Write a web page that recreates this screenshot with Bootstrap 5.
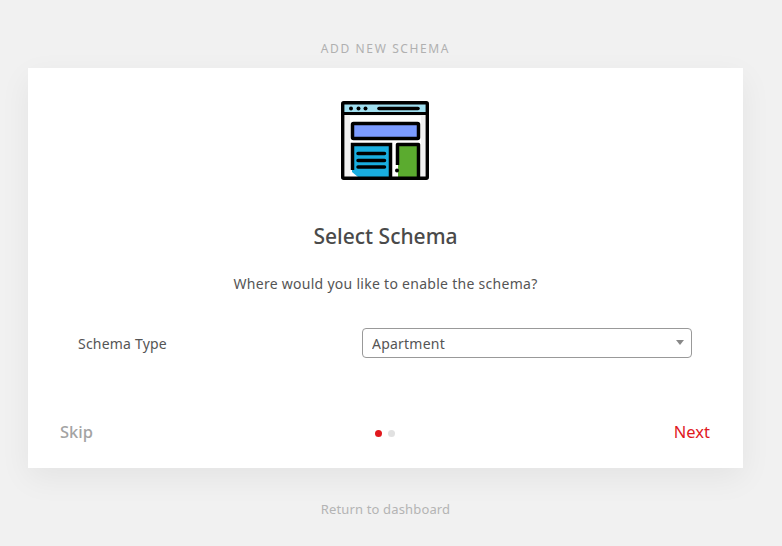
<!DOCTYPE html>
<html lang="en">
<head>
<meta charset="utf-8">
<title>Add New Schema</title>
<link href="https://cdn.jsdelivr.net/npm/bootstrap@5.3.0/dist/css/bootstrap.min.css" rel="stylesheet">
<style>
html,body{height:546px;overflow:hidden}
body{background:#f1f1f1;font-family:"Noto Sans","Open Sans",sans-serif;color:#555}
.wiz-shell{padding:41px 39px 0 28px}
.wiz-top{font-size:12px;line-height:16px;letter-spacing:1.62px;color:#b0b0b0;height:27px;text-transform:uppercase}
.wiz-card{height:400px;background:#fff;box-shadow:0 10px 30px rgba(0,0,0,.06);border-radius:0;border:0}
.wiz-logo{padding-top:33px;height:112px}
.wiz-logo svg{margin-left:-1px;display:inline-block;vertical-align:top}
.wiz-title{font-size:21px;line-height:28px;font-weight:500;color:#4a4a4a;margin:42px 0 0;height:28px}
.wiz-sub{font-size:14px;line-height:20px;letter-spacing:.28px;color:#555;margin:24px 0 0}
.wiz-row{padding:0 51px 0 50px;margin-top:34px;height:30px}
.wiz-label{font-size:14px;letter-spacing:.2px;color:#555;width:284px}
.wiz-select{width:330px;height:30px;padding:1px 28px 0 9px;font-size:14px;line-height:28px;letter-spacing:.22px;color:#555;border:1px solid #999;border-radius:4px;background-image:none;background-color:#fff}
.wiz-drop{position:relative}
.wiz-arrow{position:absolute;right:8px;top:12px;width:0;height:0;border-left:4.5px solid transparent;border-right:4.5px solid transparent;border-top:5px solid #888;pointer-events:none}
.wiz-foot{padding:0 33px 0 32px;margin-top:62px;position:relative}
.wiz-skip,.wiz-next{font-size:16.5px;line-height:24px;text-decoration:none}
.wiz-skip{color:#a3a3a3;font-weight:500}
.wiz-next{color:#e1191e}
.wiz-dots{margin-left:3px;margin-top:2px;gap:6px}
.wiz-dot{width:7px;height:7px;border-radius:50%;background:#e1e1e1}
.wiz-dot-on{background:#e1191e}
.wiz-back{font-size:13px;line-height:18px;color:#b4b4b4;text-decoration:none;letter-spacing:.15px}
.wiz-backrow{margin-top:28px}
</style>
</head>
<body>
<div class="wiz-shell">
  <div class="wiz-top text-center">Add New Schema</div>
  <div class="card wiz-card">
    <div class="wiz-logo text-center">
      <svg width="88" height="80" viewBox="341 101 88 80" xmlns="http://www.w3.org/2000/svg">
        <rect x="343" y="103" width="84" height="75" fill="#f1f1f1"/>
        <rect x="350" y="116" width="71" height="62" fill="#fff"/>
        <rect x="343" y="103" width="84" height="10" fill="#a0dff0"/>
        <path d="M352 145H390V177H358L352 172Z" fill="#19aee0"/>
        <rect x="398" y="145" width="19" height="32" fill="#5bab2f"/>
        <rect x="352.500" y="123.500" width="66" height="15" fill="#7b9bff" stroke="#000" stroke-width="3.500" rx="1"/>
        <rect x="342.700" y="102.700" width="84.600" height="75.600" fill="none" stroke="#000" stroke-width="3.400" rx="1"/>
        <path d="M343 113.500H427" stroke="#000" stroke-width="3.200"/>
        <circle cx="351" cy="108.500" r="2"/><circle cx="358.500" cy="108.500" r="2"/><circle cx="365.500" cy="108.500" r="2"/>
        <path d="M379 108.500H418" stroke="#000" stroke-width="3.600" stroke-linecap="round"/>
        <path d="M352.500 170V144.500H390.500V178" fill="none" stroke="#000" stroke-width="3.500"/>
        <path d="M358 153.500H384.500M358 160.500H384.500M358 167H384.500" stroke="#000" stroke-width="3.500" stroke-linecap="round"/>
        <path d="M397.500 165V144.500H418.500V178" fill="none" stroke="#000" stroke-width="3.500" stroke-linejoin="round"/>
        <circle cx="397" cy="170.500" r="2"/>
      </svg>
    </div>
    <h1 class="wiz-title text-center">Select Schema</h1>
    <p class="wiz-sub text-center">Where would you like to enable the schema?</p>
    <div class="wiz-row d-flex align-items-center">
      <label class="wiz-label" for="wizType">Schema Type</label>
      <div class="wiz-drop">
        <select id="wizType" class="form-select wiz-select"><option>Apartment</option></select>
        <span class="wiz-arrow"></span>
      </div>
    </div>
    <div class="wiz-foot d-flex justify-content-between align-items-center">
      <a class="wiz-skip" href="#">Skip</a>
      <div class="wiz-dots d-flex align-items-center"><span class="wiz-dot wiz-dot-on"></span><span class="wiz-dot"></span></div>
      <a class="wiz-next" href="#">Next</a>
    </div>
  </div>
  <div class="wiz-backrow text-center"><a class="wiz-back" href="#">Return to dashboard</a></div>
</div>
<script src="https://cdn.jsdelivr.net/npm/bootstrap@5.3.0/dist/js/bootstrap.bundle.min.js"></script>
</body>
</html>
